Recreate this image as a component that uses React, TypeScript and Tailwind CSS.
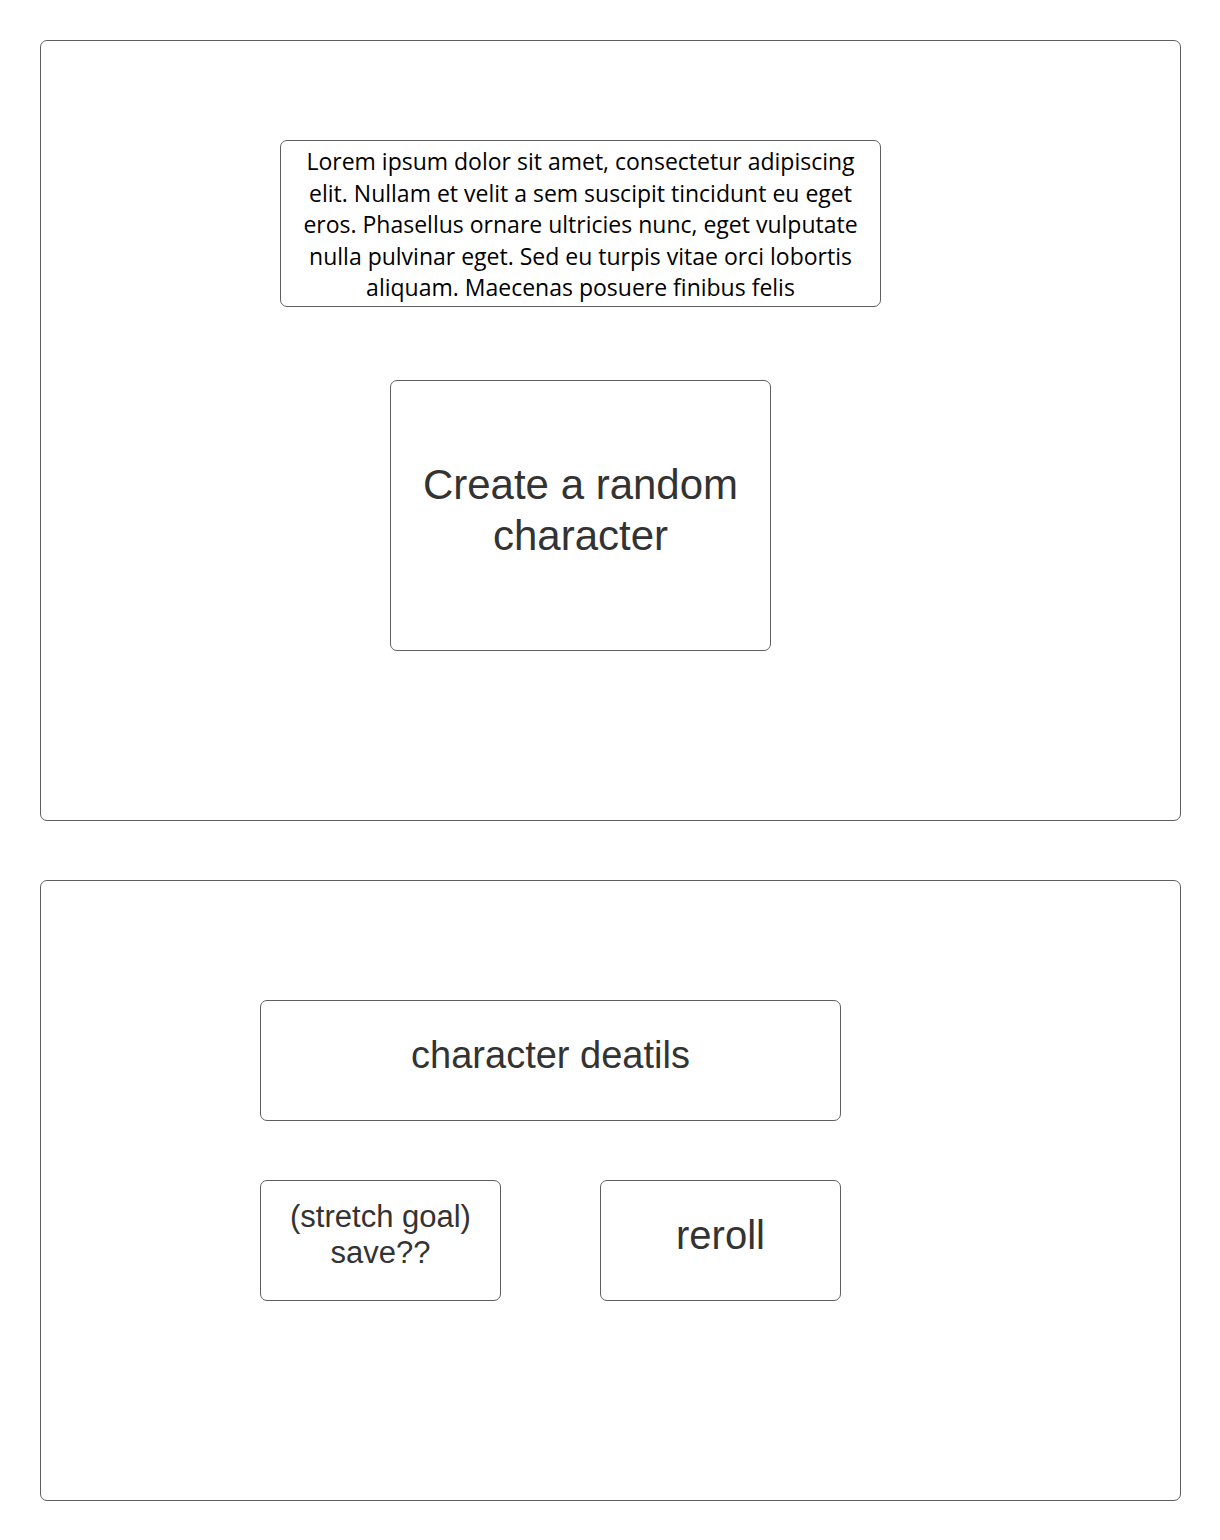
import React from 'react';

const sans = { fontFamily: '"Liberation Sans", Arial, sans-serif' };

const App = () => {
  return (
    <div className="min-h-[1540px] w-[1220px] bg-white px-10 pt-10">
      {/* Intro frame */}
      <div className="h-[781px] w-[1141px] rounded-[7px] border border-[#5f5f5f] pl-[239px] pt-[99px]">
        <div className="flex w-[601px] flex-col items-center gap-[73px]">
          <div className="flex h-[167px] w-[601px] items-center justify-center rounded-[7px] border border-[#5f5f5f] px-3 pt-[3px]">
            <p className="text-center font-['Open_Sans',sans-serif] text-[23px] leading-[31.6px] text-black">
              Lorem ipsum dolor sit amet, consectetur adipiscing elit. Nullam et velit a sem suscipit tincidunt eu
              eget eros. Phasellus ornare ultricies nunc, eget vulputate nulla pulvinar eget. Sed eu turpis vitae
              orci lobortis aliquam. Maecenas posuere finibus felis
            </p>
          </div>
          <button
            style={sans}
            className="flex h-[271px] w-[381px] items-center justify-center rounded-[7px] border border-[#5f5f5f] bg-white pb-[12px] text-center text-[42px] leading-[51px] text-[#333333]"
          >
            Create a random
            <br />
            character
          </button>
        </div>
      </div>

      {/* Result frame */}
      <div className="mt-[59px] h-[621px] w-[1141px] rounded-[7px] border border-[#5f5f5f] pl-[219px] pt-[119px]" style={sans}>
        <div className="flex w-[581px] flex-col gap-[59px]">
          <div className="flex h-[121px] w-[581px] items-center justify-center rounded-[7px] border border-[#5f5f5f] pb-[12px] text-[38px] leading-[44px] text-[#333333]">
            character deatils
          </div>
          <div className="flex gap-[99px]">
            <button className="flex h-[121px] w-[241px] items-center justify-center rounded-[7px] border border-[#5f5f5f] bg-white pb-[11px] text-center text-[31px] leading-[36px] text-[#333333]">
              (stretch goal)
              <br />
              save??
            </button>
            <button className="flex h-[121px] w-[241px] items-center justify-center rounded-[7px] border border-[#5f5f5f] bg-white pb-[12px] text-[40px] leading-[46px] text-[#333333]">
              reroll
            </button>
          </div>
        </div>
      </div>
    </div>
  );
};

export default App;
